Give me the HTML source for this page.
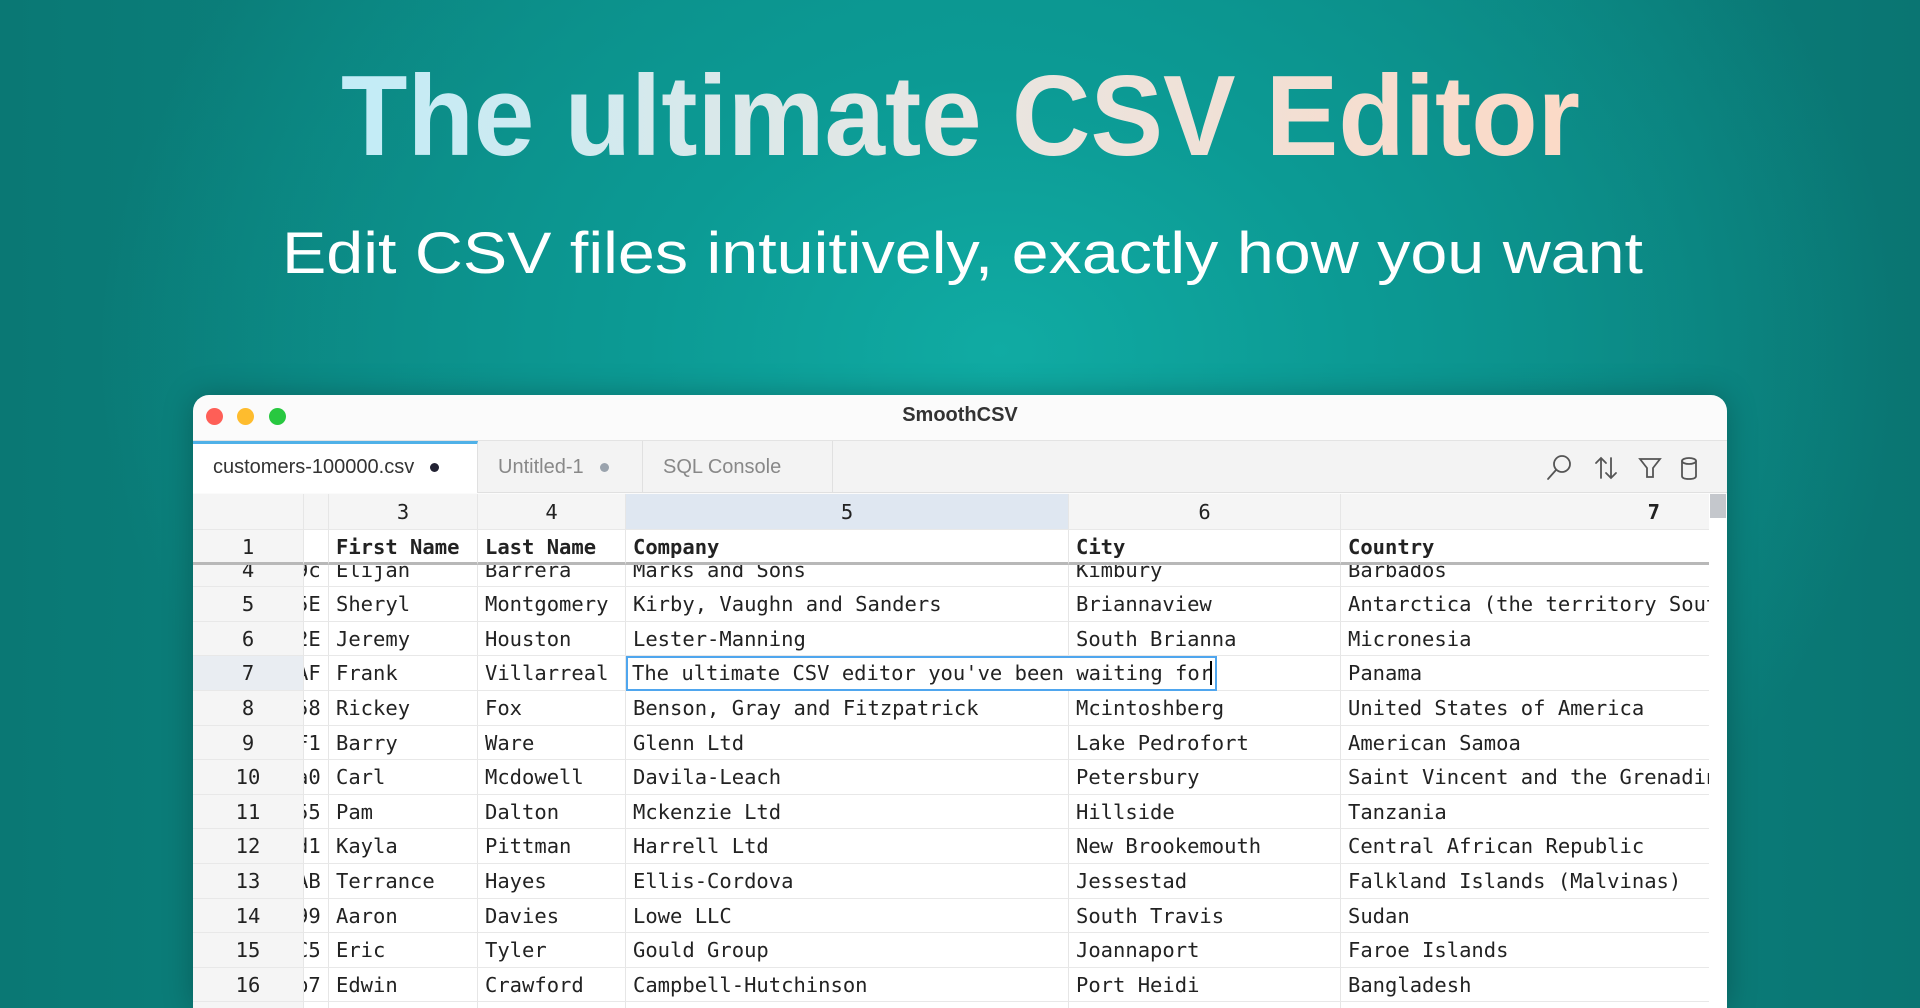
<!DOCTYPE html>
<html><head><meta charset="utf-8"><style>
*{margin:0;padding:0;box-sizing:border-box}
html{width:1920px;height:1008px;overflow:hidden}
body{width:1920px;height:1008px;overflow:hidden;position:relative;font-family:"Liberation Sans",sans-serif;
background:radial-gradient(ellipse 900px 700px at 1000px 350px,#10aba3 0%,#0c9a94 40%,rgba(12,140,135,0) 100%),linear-gradient(90deg,#0a7874 0%,#0d8f8a 50%,#0a7572 100%);}
.win{position:absolute;left:193px;top:395px;width:1534px;height:613px;background:#fbfbfb;border-radius:16px 16px 0 0;overflow:hidden;box-shadow:0 0 30px rgba(0,0,0,.25)}
.tl{position:absolute;top:408px;width:17px;height:17px;border-radius:50%}
.title{position:absolute;left:0;right:0;top:404px;text-align:center;font-weight:bold;font-size:20px;color:#333}
.tabbar{position:absolute;left:0;top:45px;width:1534px;height:53px;background:#f3f3f3;border-top:1px solid #e3e3e3;border-bottom:1px solid #e0e0e0}
.tab{position:absolute;top:0;height:52px;line-height:52px;font-size:20px;color:#888;border-right:1px solid #e0e0e0}
.tab.a{background:#fff;color:#333;border-top:3px solid #4fb1e8;line-height:47px}
.dot{display:inline-block;width:9px;height:9px;border-radius:50%;margin-left:16px;vertical-align:middle}
.mono{font-family:"DejaVu Sans Mono","Liberation Mono",monospace;font-size:20.5px;color:#222}
.cell{position:absolute;height:34.6px;line-height:34.6px;white-space:nowrap;overflow:hidden;border-right:1px solid #e6e6e6;border-bottom:1px solid #e8e8e8;padding-left:7px}
</style></head><body>
<svg width="1920" height="320" style="position:absolute;left:0;top:0">
<defs><linearGradient id="tgrad" x1="340" x2="1580" y1="0" y2="0" gradientUnits="userSpaceOnUse"><stop offset="0" stop-color="#c2ecf7"/><stop offset=".5" stop-color="#e8e6e2"/><stop offset="1" stop-color="#fcd9c6"/></linearGradient></defs>
<text x="341" y="155" font-family="Liberation Sans" font-weight="bold" font-size="114" fill="url(#tgrad)" textLength="1239" lengthAdjust="spacingAndGlyphs">The ultimate CSV Editor</text>
<text x="282" y="273" font-family="Liberation Sans" font-size="58" fill="#fff" textLength="1361" lengthAdjust="spacingAndGlyphs">Edit CSV files intuitively, exactly how you want</text>
</svg>
<div class="win">
<div class="tabbar">
<div class="tab a" style="left:0;width:285px;padding-left:20px">customers-100000.csv<span class="dot" style="background:#223"></span></div>
<div class="tab" style="left:285px;width:165px;padding-left:20px">Untitled-1<span class="dot" style="background:#9aa3ad"></span></div>
<div class="tab" style="left:450px;width:190px;padding-left:20px">SQL Console</div>
<svg style="position:absolute;left:1350px;top:12px" width="160" height="30" fill="none" stroke="#555" stroke-width="1.8" stroke-linecap="round">
<circle cx="19" cy="11" r="8"/><path d="M13 17 L5 26"/>
<path d="M58 5 V25 M53 10 L58 5 L63 10 M68 5 V25 M63 20 L68 25 L73 20"/>
<path d="M97 6 H117 L110 15 V24 L104 24 V15 Z"/>
<ellipse cx="146" cy="8" rx="7" ry="3"/><path d="M139 8 V23 Q139 26 146 26 Q153 26 153 23 V8"/>
</svg>
</div>
</div>
<div class="tl" style="left:206px;background:#fe5f57"></div>
<div class="tl" style="left:237px;background:#febc2e"></div>
<div class="tl" style="left:269px;background:#28c840"></div>
<div class="title">SmoothCSV</div>
<div style="position:absolute;left:193px;top:494px;width:1516px;height:514px;background:#fff;overflow:hidden" class="mono" id="grid"></div>
<div style="position:absolute;left:1709px;top:494px;width:18px;height:514px;background:#fff"></div>
<div style="position:absolute;left:1710px;top:494px;width:16px;height:24px;background:#c4c7cc"></div>
<script>
var cols=[[0,111],[111,25],[136,149],[285,148],[433,443],[876,272],[1148,370]];
var g=document.getElementById('grid'),h='';
function cell(x,w,y,t,st){h+='<div class="cell" style="left:'+x+'px;width:'+w+'px;top:'+y+'px;'+(st||'')+'">'+t+'</div>';}
var hn=['','','3','4','5','6','7'];
for(var i=0;i<7;i++){cell(cols[i][0],cols[i][1],0,hn[i],'height:36px;line-height:36px;text-align:center;padding:0;background:'+(i==4?'#dfe7f1':'#f5f5f5')+';'+(i==6?'text-align:right;padding-right:50px;font-weight:bold':''));}
var rows=[
['4','9c','Elijan','Barrera','Marks and Sons','Kimbury','Barbados'],
['5','5E','Sheryl','Montgomery','Kirby, Vaughn and Sanders','Briannaview','Antarctica (the territory South'],
['6','2E','Jeremy','Houston','Lester-Manning','South Brianna','Micronesia'],
['7','AF','Frank','Villarreal','','','Panama'],
['8','58','Rickey','Fox','Benson, Gray and Fitzpatrick','Mcintoshberg','United States of America'],
['9','F1','Barry','Ware','Glenn Ltd','Lake Pedrofort','American Samoa'],
['10','a0','Carl','Mcdowell','Davila-Leach','Petersbury','Saint Vincent and the Grenadines'],
['11','55','Pam','Dalton','Mckenzie Ltd','Hillside','Tanzania'],
['12','d1','Kayla','Pittman','Harrell Ltd','New Brookemouth','Central African Republic'],
['13','AB','Terrance','Hayes','Ellis-Cordova','Jessestad','Falkland Islands (Malvinas)'],
['14','99','Aaron','Davies','Lowe LLC','South Travis','Sudan'],
['15','C5','Eric','Tyler','Gould Group','Joannaport','Faroe Islands'],
['16','b7','Edwin','Crawford','Campbell-Hutchinson','Port Heidi','Bangladesh'],
['','','','','','','']];
for(var r=0;r<rows.length;r++){var y=58.6+r*34.6;
for(var i=0;i<7;i++){var st='';if(i==0)st='text-align:center;padding:0;background:'+(r==3?'#e9edf2':'#f5f5f5');
if(i==1)st='padding:0;text-indent:-8px';
cell(cols[i][0],cols[i][1],y,rows[r][i],st);}}
var hr=['1','','First Name','Last Name','Company','City','Country'];
for(var i=0;i<7;i++){cell(cols[i][0],cols[i][1],36,hr[i],'height:35px;line-height:35px;font-weight:bold;background:'+(i==0?'#f5f5f5':'#fff')+';'+(i==0?'text-align:center;padding:0;font-weight:normal;':'')+'border-bottom:3px solid #b8b8b8');}
h+='<div style="position:absolute;left:433px;top:162.4px;width:591px;height:35px;border:2px solid #4fa6ee;line-height:31px;padding-left:4px;background:#fff;white-space:nowrap">The ultimate CSV editor you\'ve been waiting for<span style="border-left:2px solid #000;margin-left:-2px">&#8203;</span></div>';
g.innerHTML=h;
</script>
</body></html>
